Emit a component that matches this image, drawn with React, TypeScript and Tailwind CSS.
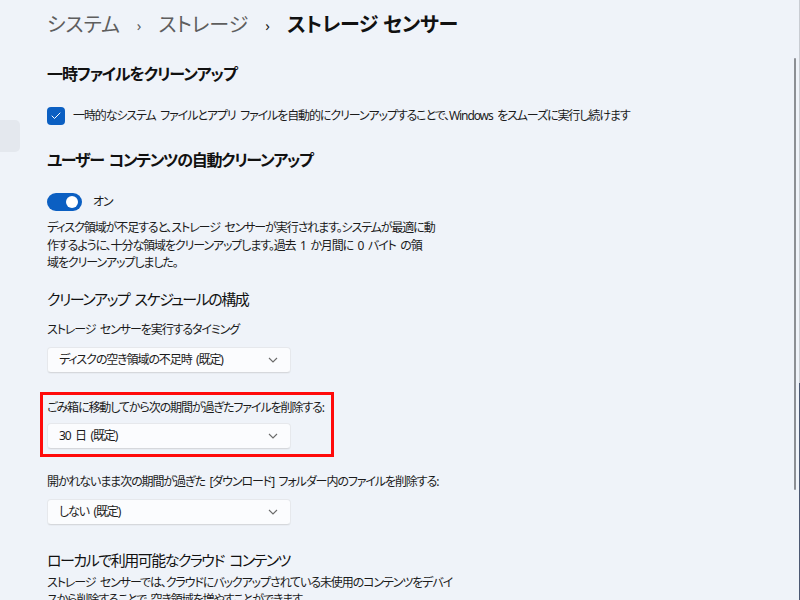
import { Check } from "lucide-react";

const font =
  "[font-family:'Noto_Sans','Noto_Sans_CJK_JP',sans-serif] [font-feature-settings:'palt']";

// body copy: narrow kana, but keep the half-width spaces readable
const body = "text-[12px] tracking-[-1.1px] [word-spacing:2.5px] text-[#1b1b1b]";

function Chevron() {
  return (
    <svg width="10" height="6" viewBox="0 0 10 6" className="text-[#6b6b6b]">
      <path d="M1 1 L5 5 L9 1" fill="none" stroke="currentColor" strokeWidth="1.1" />
    </svg>
  );
}

function Dropdown({ value }: { value: string }) {
  return (
    <div
      className={`flex h-[26px] w-[244px] items-center justify-between rounded-[4px] border border-[#e6e8ec] border-b-[#d6d8dc] bg-[#fbfcfe] pl-[11px] pr-[12px] shadow-[0_1px_1px_rgba(0,0,0,0.03)] ${body}`}
    >
      <span className="whitespace-nowrap leading-[18px]">{value}</span>
      <Chevron />
    </div>
  );
}

function Label({ children }: { children: React.ReactNode }) {
  return <div className={`whitespace-nowrap leading-[18px] ${body}`}>{children}</div>;
}

export default function App() {
  return (
    <div className={`relative h-[600px] w-[800px] overflow-hidden bg-[#eff3f9] ${font}`}>
      {/* nav pane remnant on the left */}
      <div className="absolute left-0 top-[120px] h-[32px] w-[20px] rounded-r-[5px] bg-[#e4e8ee]" />

      {/* scrollbar */}
      <div className="absolute right-[4px] top-[58px] h-[432px] w-[2px] rounded-full bg-[#8c8f94]" />
      <div className="absolute right-0 top-0 flex h-[600px] w-[1px] flex-col">
        <div className="h-[383px] bg-[#c9cdd3]" />
        <div className="flex-1 bg-[#4b5872]" />
      </div>

      <div className="flex flex-col pl-[47px]">
        {/* breadcrumb */}
        <div className="mt-[12px] flex items-center whitespace-nowrap text-[20px] leading-[26px]">
          <span className="text-[#5e5e5e]">システム</span>
          <span className="mx-[17px] text-[15px] text-[#5e5e5e]">›</span>
          <span className="text-[#5e5e5e]">ストレージ</span>
          <span className="mx-[17px] text-[15px] text-[#1b1b1b]">›</span>
          <span className="font-semibold tracking-[-0.3px] text-[#111]">ストレージ センサー</span>
        </div>

        <div className="mt-[25px] text-[16px] font-semibold leading-[22px] tracking-[-1.1px] text-[#111]">
          一時ファイルをクリーンアップ
        </div>

        <div className="mt-[21px] flex h-[20px] items-center gap-[8px]">
          <div className="flex h-[18px] w-[18px] items-center justify-center rounded-[4px] bg-[#0b5fc2]">
            <Check size={12} strokeWidth={2} className="text-white" />
          </div>
          <span className={`whitespace-nowrap ${body}`}>
            一時的なシステム ファイルとアプリ ファイルを自動的にクリーンアップすることで、Windows をスムーズに実行し続けます
          </span>
        </div>

        <div className="mt-[23px] text-[16px] font-semibold leading-[22px] tracking-[-1.3px] [word-spacing:2px] text-[#111]">
          ユーザー コンテンツの自動クリーンアップ
        </div>

        <div className="mt-[21px] flex h-[20px] items-center gap-[11px]">
          <div className="flex h-[18px] w-[35px] items-center justify-end rounded-full bg-[#0b5fc2] pr-[4px]">
            <div className="h-[12px] w-[12px] rounded-full bg-white" />
          </div>
          <span className={body}>オン</span>
        </div>

        <div className={`mt-[7px] whitespace-nowrap leading-[17.5px] ${body}`}>
          <div>ディスク領域が不足すると、ストレージ センサーが実行されます。システムが最適に動</div>
          <div>作するように、十分な領域をクリーンアップします。過去 1 か月間に 0 バイト の領</div>
          <div>域をクリーンアップしました。</div>
        </div>

        <div className="mt-[17px] text-[15px] leading-[20px] tracking-[-1.5px] [word-spacing:3px] text-[#111]">
          クリーンアップ スケジュールの構成
        </div>

        <div className="mt-[12px]">
          <Label>ストレージ センサーを実行するタイミング</Label>
        </div>
        <div className="mt-[8px]">
          <Dropdown value="ディスクの空き領域の不足時 (既定)" />
        </div>

        {/* highlighted setting */}
        <div className="ml-[-7px] mt-[19px] w-[294px] border-[3px] border-[#ff0a0a] pb-[5px] pl-[4px] pt-[4px]">
          <Label>ごみ箱に移動してから次の期間が過ぎたファイルを削除する:</Label>
          <div className="mt-[6px]">
            <Dropdown value="30 日 (既定)" />
          </div>
        </div>

        <div className="mt-[16px]">
          <Label>開かれないまま次の期間が過ぎた [ダウンロード] フォルダー内のファイルを削除する:</Label>
        </div>
        <div className="mt-[8px]">
          <Dropdown value="しない (既定)" />
        </div>

        <div className="mt-[24px] text-[15px] leading-[22px] tracking-[-1.5px] [word-spacing:3px] text-[#111]">
          ローカルで利用可能なクラウド コンテンツ
        </div>
        <div className={`mt-[3px] whitespace-nowrap leading-[17.5px] ${body}`}>
          <div>ストレージ センサーでは、クラウドにバックアップされている未使用のコンテンツをデバイ</div>
          <div>スから削除することで、空き領域を増やすことができます。</div>
        </div>
      </div>
    </div>
  );
}
